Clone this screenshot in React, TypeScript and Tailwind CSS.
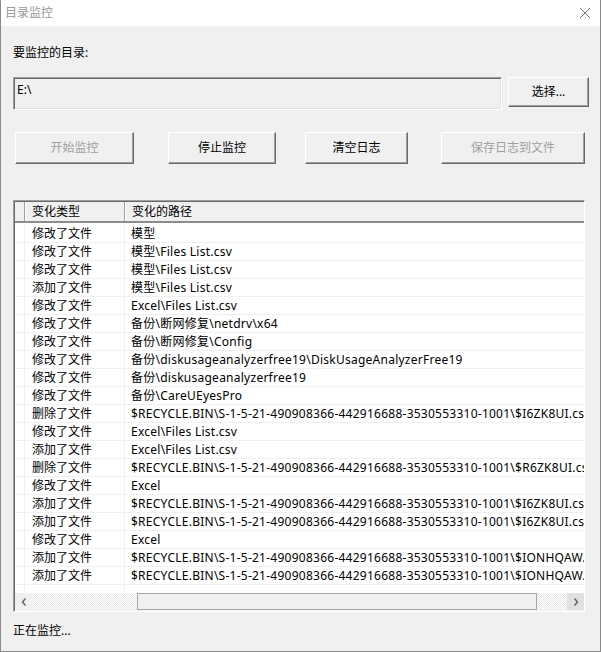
import React from 'react';

const rows: [string, string][] = [
  ['修改了文件', '模型'],
  ['修改了文件', '模型\\Files List.csv'],
  ['修改了文件', '模型\\Files List.csv'],
  ['添加了文件', '模型\\Files List.csv'],
  ['修改了文件', 'Excel\\Files List.csv'],
  ['修改了文件', '备份\\断网修复\\netdrv\\x64'],
  ['修改了文件', '备份\\断网修复\\Config'],
  ['修改了文件', '备份\\diskusageanalyzerfree19\\DiskUsageAnalyzerFree19'],
  ['修改了文件', '备份\\diskusageanalyzerfree19'],
  ['修改了文件', '备份\\CareUEyesPro'],
  ['删除了文件', '$RECYCLE.BIN\\S-1-5-21-490908366-442916688-3530553310-1001\\$I6ZK8UI.csv'],
  ['修改了文件', 'Excel\\Files List.csv'],
  ['添加了文件', 'Excel\\Files List.csv'],
  ['删除了文件', '$RECYCLE.BIN\\S-1-5-21-490908366-442916688-3530553310-1001\\$R6ZK8UI.csv'],
  ['修改了文件', 'Excel'],
  ['添加了文件', '$RECYCLE.BIN\\S-1-5-21-490908366-442916688-3530553310-1001\\$I6ZK8UI.csv'],
  ['添加了文件', '$RECYCLE.BIN\\S-1-5-21-490908366-442916688-3530553310-1001\\$I6ZK8UI.csv'],
  ['修改了文件', 'Excel'],
  ['添加了文件', '$RECYCLE.BIN\\S-1-5-21-490908366-442916688-3530553310-1001\\$IONHQAW.csv'],
  ['添加了文件', '$RECYCLE.BIN\\S-1-5-21-490908366-442916688-3530553310-1001\\$IONHQAW.csv'],
  ['', ''],
];

const btnBase =
  'h-[32px] flex items-center justify-center bg-[#f0f0f0] border-t border-l border-t-white border-l-white border-b border-r border-b-[#696969] border-r-[#696969] shadow-[inset_-1px_-1px_0_#a0a0a0]';

const WinButton = ({ label, width, disabled }: { label: string; width: string; disabled?: boolean }) => (
  <div className={`${btnBase} ${width} ${disabled ? 'text-[#a0a0a0]' : 'text-black'}`}>{label}</div>
);

const App: React.FC = () => {
  return (
    <div className="w-[601px] h-[652px] bg-[#f0f0f0] border-l border-r border-b border-[#8a8a8a] flex flex-col font-['Noto_Sans','Noto_Sans_CJK_SC',sans-serif] text-[12px] leading-[16px] text-black overflow-hidden">
      {/* title bar */}
      <div className="h-[26px] bg-white flex items-center justify-between pl-[4px] pr-[8px]">
        <span className="text-[#999999]">目录监控</span>
        <svg width="12" height="12" viewBox="0 0 12 12" className="mr-[1px]">
          <path d="M1 1L11 11M11 1L1 11" stroke="#707070" strokeWidth="1" />
        </svg>
      </div>

      <div className="pl-[12px] mt-[19px]">要监控的目录:</div>

      <div className="flex mt-[16px] pl-[12px]">
        <div className="w-[489px] h-[33px] pl-[3px] pt-[4px] bg-[#f0f0f0] border-t border-l border-t-[#a0a0a0] border-l-[#a0a0a0] border-b border-r border-b-white border-r-white shadow-[inset_1px_1px_0_#696969,inset_-1px_-1px_0_#e3e3e3]">
          E:\
        </div>
        <div className={`${btnBase} !h-[30px] w-[81px] ml-[6px]`}>选择...</div>
      </div>

      <div className="flex mt-[22px] pl-[14px]">
        <WinButton label="开始监控" width="w-[119px]" disabled />
        <div className="ml-[34px]"><WinButton label="停止监控" width="w-[108px]" /></div>
        <div className="ml-[29px]"><WinButton label="清空日志" width="w-[103px]" /></div>
        <div className="ml-[33px]"><WinButton label="保存日志到文件" width="w-[144px]" disabled /></div>
      </div>

      {/* list view */}
      <div className="ml-[12px] mt-[36px] w-[572px] h-[412px] flex flex-col border-t border-l border-t-[#a0a0a0] border-l-[#a0a0a0] border-b border-r border-b-white border-r-white shadow-[inset_1px_1px_0_#696969]">
        <div className="ml-[1px] mt-[1px] flex h-[21px] bg-[#f0f0f0] border-b-2 border-b-[#8c8c8c]">
          <div className="w-[10px] border-r border-r-[#a0a0a0]" />
          <div className="w-[100px] pl-[6px] flex items-center border-l border-l-white border-r border-r-[#a0a0a0]">变化类型</div>
          <div className="flex-1 pl-[6px] flex items-center border-l border-l-white">变化的路径</div>
        </div>
        <div className="ml-[1px] flex-1 bg-white overflow-hidden pt-[2px]">
          {rows.map(([t, p], i) => (
            <div key={i} className="flex h-[18px] border-b border-b-[#f0f0f0]">
              <div className="w-[10px] shrink-0 border-r border-r-[#f0f0f0]" />
              <div className="w-[100px] shrink-0 pl-[7px] flex items-center border-r border-r-[#f0f0f0]">{t}</div>
              <div className="flex-1 pl-[6px] flex items-center whitespace-nowrap overflow-hidden tracking-[0.25px]">{p}</div>
            </div>
          ))}
        </div>
        {/* horizontal scrollbar */}
        <div className="ml-[1px] h-[18px] flex shrink-0 bg-[repeating-conic-gradient(#ffffff_0_25%,#e6e6e6_0_50%)] bg-[length:2px_2px]">
          <div className="w-[17px] h-[17px] flex items-center justify-center bg-[#f0f0f0]">
            <svg width="6" height="8" viewBox="0 0 6 8">
              <path d="M4.5 0.5L1.5 4L4.5 7.5" stroke="#606060" strokeWidth="1.4" fill="none" />
            </svg>
          </div>
          <div className="w-[105px]" />
          <div className="w-[400px] h-[17px] bg-[#f0f0f0] border border-[#a6a6a6]" />
          <div className="flex-1" />
          <div className="w-[17px] h-[17px] flex items-center justify-center bg-[#e0e0e0]">
            <svg width="6" height="8" viewBox="0 0 6 8">
              <path d="M1.5 0.5L4.5 4L1.5 7.5" stroke="#606060" strokeWidth="1.4" fill="none" />
            </svg>
          </div>
        </div>
      </div>

      <div className="pl-[12px] mt-[11px]">正在监控...</div>
    </div>
  );
};

export default App;
